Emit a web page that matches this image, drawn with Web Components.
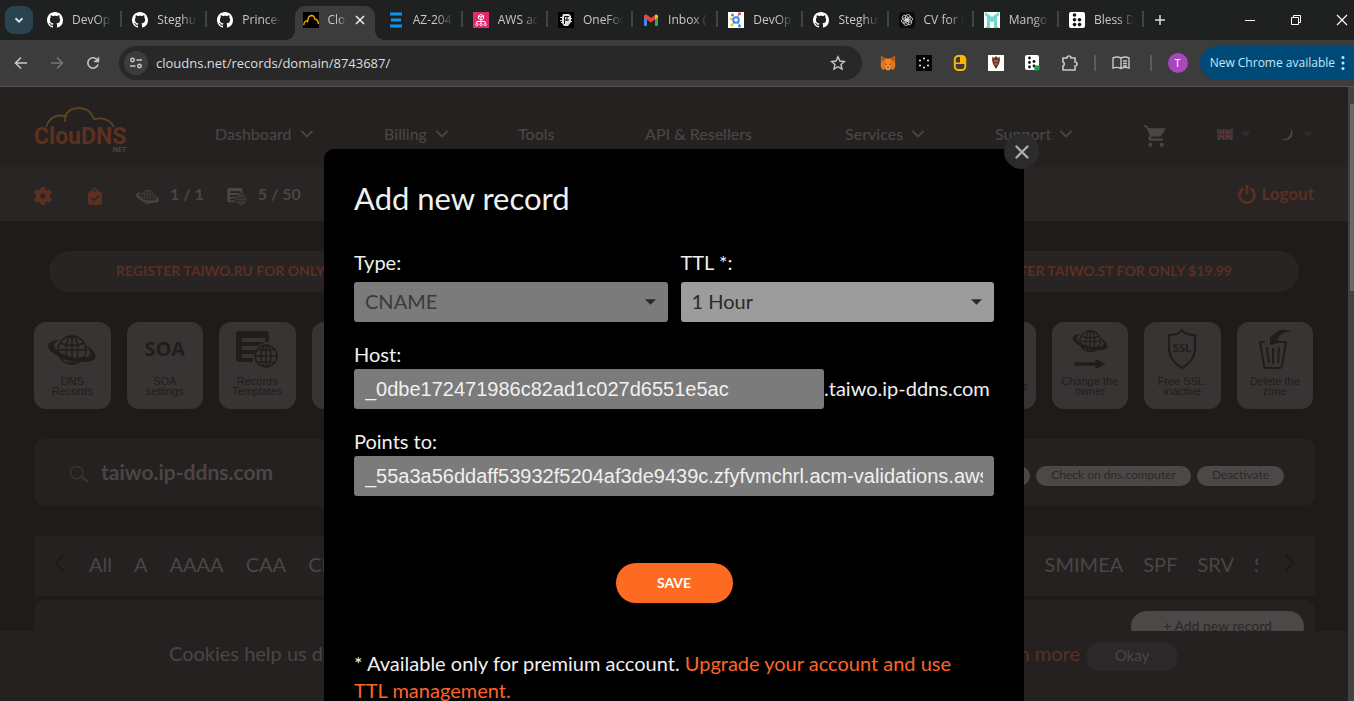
<!DOCTYPE html>
<html lang="en">
<head>
<meta charset="utf-8">
<title>ClouDNS: Add new record</title>
<style>
html,body{margin:0;height:100%}
body{background:#1f1b1a;overflow:hidden;--site:Lato,"Liberation Sans",sans-serif;--chrome:"Open Sans","Noto Sans",sans-serif;font-family:var(--site)}
</style>
</head>
<body>
<app-window></app-window>
<script>
const globe='<circle cx="24" cy="18" r="14"/><ellipse cx="24" cy="18" rx="6" ry="14"/><path d="M24 4v28M10 18h28M12 11q12 5 24 0M12 25q12 5 24 0"/>';
const ICONS={
 down:['0 0 12 12','<path d="M3 4.5l3 3 3-3" fill="none" stroke="currentColor" stroke-width="1.6"/>'],
 github:['0 0 16 16','<path fill="currentColor" d="M8 0C3.58 0 0 3.58 0 8c0 3.54 2.29 6.53 5.47 7.59.4.07.55-.17.55-.38 0-.19-.01-.82-.01-1.49-2.01.37-2.53-.49-2.69-.94-.09-.23-.48-.94-.82-1.13-.28-.15-.68-.52-.01-.53.63-.01 1.08.58 1.23.82.72 1.21 1.87.87 2.33.66.07-.52.28-.87.51-1.07-1.78-.2-3.64-.89-3.64-3.95 0-.87.31-1.59.82-2.15-.08-.2-.36-1.02.08-2.12 0 0 .67-.21 2.2.82.64-.18 1.32-.27 2-.27s1.36.09 2 .27c1.53-1.04 2.2-.82 2.2-.82.44 1.1.16 1.92.08 2.12.51.56.82 1.27.82 2.15 0 3.07-1.87 3.75-3.65 3.95.29.25.54.73.54 1.48 0 1.07-.01 1.93-.01 2.2 0 .21.15.46.55.38A8.01 8.01 0 0 0 16 8c0-4.42-3.58-8-8-8z"/>'],
 cloud:['0 0 16 16','<path fill="#000" d="M0 0h16v16H0z"/><path fill="none" stroke="#f6a200" stroke-width="1.4" d="M.8 13c.2-3 2-4.6 4-4.400C5 5.500 6 3.800 8.500 3.500c2 0 3 1.500 3.200 3.500 2 .2 3.500 2.500 3.700 5M4.500 9v1.500"/>'],
 bars:['0 0 16 16','<path fill="#0a95ea" d="M2 .5h12v3H2zM3 6.500h10v3H3zM2 12.500h12v3H2z"/>'],
 aws:['0 0 16 16','<path fill="#e0296f" d="M0 0h16v16H0z"/><g fill="none" stroke="#fff"><path d="M8 2.500l2.500 1.300v2.800L8 8 5.500 6.600V3.800zM5.500 3.800L8 5l2.500-1.200M8 5v6M3.800 11.500V9.500h8.400v2"/><circle cx="3.800" cy="12.500" r="1.100"/><circle cx="8" cy="12.500" r="1.100"/><circle cx="12.200" cy="12.500" r="1.100"/></g>'],
 one:['0 0 16 16','<path fill="#000" d="M0 0h16v16H0z"/><path fill="#ddd" d="M5 2h6l2 2v2h1v1h-1v2h1v1h-1l-3 4H6l-2-3H3v-1h1V9H2V8h2V6H2V5h2z"/><path fill="none" stroke="#111" d="M6.500 12V4.500H11M6.500 8H11M9 4v5"/>'],
 gmail:['0 0 16 16','<path fill="#4285f4" d="M1 4l3 2v8H2a1 1 0 0 1-1-1z"/><path fill="#34a853" d="M12 6l3-2v9a1 1 0 0 1-1 1h-2z"/><path fill="#ea4335" d="M1 4.500C1 2.500 3 2 4.300 3L8 6l4-3v4.500L8 10.500 1 5.500z"/><path fill="#fbbc04" d="M12 3c1.500-1 3 0 3 1.500V5.500L12 7.500z"/>'],
 devops:['0 0 16 16','<path fill="#fff" d="M0 0h16v16H0z"/><circle cx="8" cy="8" r="2.800" fill="none" stroke="#4285f4" stroke-width="2"/><path d="M9.500 5l1.500-3M6 10.500l-1.500 2M10.500 10.500l1 3" stroke="#4285f4"/><circle cx="4.500" cy="3" r="1.500" fill="#34a853"/><circle cx="11.500" cy="1.700" r="1.500" fill="#ea4335"/><circle cx="3" cy="7" r="1.200" fill="#fbbc04"/><circle cx="4" cy="13" r="1.500" fill="#fbbc04"/><circle cx="11.500" cy="14" r="1.500" fill="#4285f4"/>'],
 gpt:['0 0 16 16','<rect width="16" height="16" rx="3" fill="#0b0b0b"/><g fill="none" stroke="#ddd" stroke-width=".8"><ellipse cx="8.800" cy="5.600" rx="2.500" ry="3.200"/><ellipse cx="8.800" cy="5.600" rx="2.500" ry="3.200" transform="rotate(60 8 8)"/><ellipse cx="8.800" cy="5.600" rx="2.500" ry="3.200" transform="rotate(120 8 8)"/><ellipse cx="8.800" cy="5.600" rx="2.500" ry="3.200" transform="rotate(180 8 8)"/><ellipse cx="8.800" cy="5.600" rx="2.500" ry="3.200" transform="rotate(240 8 8)"/><ellipse cx="8.800" cy="5.600" rx="2.500" ry="3.200" transform="rotate(300 8 8)"/></g>'],
 mango:['0 0 16 16','<path fill="#f4fffd" d="M0 0h16v16H0z"/><path fill="#74d5cb" d="M1 0l7 5 7-5v3l-2 2v9l2 2h-5V9L8 10.500 6 9v7H1l2-2V5L1 3z"/>'],
 bless:['0 0 16 16','<rect width="16" height="16" rx="2" fill="#fff"/><g fill="#111"><circle cx="5.500" cy="3" r="1.800"/><circle cx="5.500" cy="7.800" r="1.800"/><circle cx="10.500" cy="7.800" r="1.800"/><circle cx="5.500" cy="12.600" r="1.800"/><circle cx="10.500" cy="12.600" r="1.800"/></g>'],
 blessOn:['0 0 16 16','<rect x="1" width="14" height="15" rx="2" fill="#fff"/><g fill="#111"><circle cx="5.500" cy="3" r="1.400"/><circle cx="5.500" cy="7.500" r="1.400"/><circle cx="10" cy="6.500" r="1.400"/><circle cx="5.500" cy="12" r="1.400"/><circle cx="10" cy="11" r="1.400"/></g><circle cx="13" cy="13" r="2.800" fill="#1ea446"/>'],
 close:['0 0 12 12','<path d="M2 2l8 8M10 2l-8 8" stroke="currentColor" stroke-width="1.500"/>'],
 bigclose:['0 0 16 16','<path d="M2.500 2.500l11 11M13.500 2.500l-11 11" stroke="currentColor" stroke-width="2.400" stroke-linecap="round"/>'],
 plus:['0 0 12 12','<path d="M6 1v10M1 6h10" stroke="currentColor" stroke-width="1.500"/>'],
 min:['0 0 12 12','<path d="M1 6.500h10" stroke="currentColor"/>'],
 restore:['0 0 12 12','<path d="M1.500 3.500h7v7h-7zM3.500 3.500v-2h7v7h-2" fill="none" stroke="currentColor"/>'],
 winx:['0 0 12 12','<path d="M1 1l10 10M11 1L1 11" stroke="currentColor" stroke-width="1.100"/>'],
 back:['0 0 14 14','<path d="M13 7H2M7 1.500L1.500 7 7 12.500" fill="none" stroke="currentColor" stroke-width="1.600"/>'],
 fwd:['0 0 14 14','<path d="M1 7h11M7 1.500L12.500 7 7 12.500" fill="none" stroke="currentColor" stroke-width="1.600"/>'],
 reload:['0 0 14 14','<path d="M12 8.500A5.200 5.200 0 1 1 11.500 4.300M12.400 1.200v4.200H8.200" fill="none" stroke="currentColor" stroke-width="1.600"/>'],
 tune:['0 0 14 14','<g fill="none" stroke="currentColor" stroke-width="1.500"><circle cx="3.500" cy="4" r="1.700"/><path d="M7.500 4H13M1 10h5.500"/><circle cx="10.500" cy="10" r="1.700"/></g>'],
 star:['0 0 16 16','<path d="M8 1.800l1.900 4.200 4.500.5-3.400 3 1 4.500L8 11.700 4 14l1-4.500-3.400-3L6.100 6z" fill="none" stroke="currentColor" stroke-width="1.400"/>'],
 fox:['0 0 16 16','<path fill="#e2761b" d="M.8.800L6 3.500h4L15.200.8l-.2 6 .4 4-1.500 4-3.400-.8-1.300 1.200H6.800l-1.300-1.200-3.400.8-1.500-4 .4-4z"/><path fill="#a8561f" d="M.8.800L6 4 2 6.500zM15.200.8L10 4l4 2.500z"/><path fill="#f6851b" d="M6 4h4l2 6-2 3H6l-2-3z"/><path fill="#233447" d="M4.500 8.500l2 .5-.5 1zM11.500 8.500l-2 .5.500 1z"/><path fill="#d7c1b3" d="M6 12.500h4l-.8 2.500H6.800z"/><path fill="#222" d="M7 12.500h2l-.5 1.200h-1z"/>'],
 dots:['0 0 16 16','<path fill="#050505" d="M0 0h16v16H0z"/><g fill="#eee"><circle cx="8" cy="3.500" r="1"/><circle cx="4" cy="5.500" r="1"/><circle cx="12" cy="5.500" r="1"/><circle cx="4" cy="10.500" r="1"/><circle cx="12" cy="10.500" r="1"/><circle cx="8" cy="12.500" r="1"/></g>'],
 mouse:['0 0 16 16','<rect x="2.800" y="1" width="10.500" height="14" rx="3.500" fill="none" stroke="#fdb300" stroke-width="2"/><path fill="#fdb300" d="M8 1h3q2.500 0 2.500 3v4H8zM3 7.500h10v1.500H3z"/>'],
 crest:['0 0 16 16','<path fill="#fff" d="M0 0h16v16H0z"/><path fill="#6b3428" d="M4.500 1.500L6 3l2-2 2 2 1.500-1.500L12 5l-1 4-3 5-3-5-1-4z"/><path d="M6 6h4M6.500 9h3" stroke="#d98c62"/>'],
 puzzle:['0 0 18 18','<path d="M3 4h4a2 2 0 0 1 4 0h4v4a2 2 0 0 1 0 4v4H3v-4a2.200 2.200 0 0 0 0-4z" fill="none" stroke="currentColor" stroke-width="1.600"/>'],
 book:['0 0 18 16','<path d="M9 3Q5 1 1 3v10q4-1.500 8 .5 4-2 8-.5V3Q13 1 9 3v10.500M11 6h4M11 8.500h4M11 11h4" fill="none" stroke="currentColor" stroke-width="1.400"/>'],
 more:['0 0 4 16','<g fill="currentColor"><circle cx="2" cy="2.500" r="1.500"/><circle cx="2" cy="8" r="1.500"/><circle cx="2" cy="13.500" r="1.500"/></g>'],
 chev:['0 0 14 10','<path d="M1.500 2L7 7.500 12.500 2" fill="none" stroke="currentColor" stroke-width="1.900"/>'],
 caret:['0 0 12 6','<path d="M0 0h12L6 6z" fill="currentColor"/>'],
 left:['0 0 10 18','<path d="M9 1L2 9l7 8" fill="none" stroke="currentColor" stroke-width="2"/>'],
 right:['0 0 10 18','<path d="M1 1l7 8-7 8" fill="none" stroke="currentColor" stroke-width="2"/>'],
 cart:['0 0 24 24','<path fill="currentColor" d="M7 18a2 2 0 1 0 0 4 2 2 0 0 0 0-4zM1 1v2h2l3.600 7.600-1.400 2.500C4.500 14.400 5.500 16 7 16h12v-2H7.400l1.100-2h7.500a2 2 0 0 0 1.700-1L22 4H5.200l-.9-2zM18 18a2 2 0 1 0 0 4 2 2 0 0 0 0-4z"/>'],
 flag:['0 0 16 11','<path fill="#2f2a36" d="M0 0h16v11H0z"/><path d="M0 0l16 11M16 0L0 11" stroke="#443c3f" stroke-width="2"/><path d="M8 0v11M0 5.500h16" stroke="#4a4042" stroke-width="4"/><path d="M8 0v11M0 5.500h16" stroke="#572125" stroke-width="2"/>'],
 moon:['0 0 16 16','<path fill="currentColor" d="M10.500.5A7.800 7.800 0 1 1 .5 12.500 8.300 8.300 0 0 0 10.500.5z"/>'],
 gear:['2 2 20 20','<path fill="currentColor" fill-rule="evenodd" d="M19.600 13.500l.1-1.500-.1-1.500 2.300-1.800-2.300-4-2.800 1.100-2.300-1.400L14 1.500h-4l-.5 2.900-2.300 1.400-2.800-1.100-2.300 4 2.300 1.800-.1 1.500.1 1.500-2.300 1.800 2.300 4 2.800-1.100 2.300 1.400.5 2.900h4l.5-2.900 2.300-1.400 2.800 1.100 2.300-4zM12 15a3 3 0 1 1 0-6 3 3 0 0 1 0 6z"/>'],
 task:['0 0 14 18','<path fill="currentColor" d="M7 0l3 3 4 3v10a2 2 0 0 1-2 2H2a2 2 0 0 1-2-2V6l4-3z"/><circle cx="7" cy="3.500" r="1" fill="#282423"/><path d="M3.500 11l2.500 2.500 5-5" fill="none" stroke="#282423" stroke-width="1.500"/>'],
 planet:['0 0 48 34','<g fill="none" stroke="currentColor" stroke-width="1.400">'+globe+'</g><path fill="currentColor" fill-rule="evenodd" d="M11 8C3 8-2 12 1 17c5 8 24 14 36 13 9 0 12-4 10-8-1-3-6-7-10-9 4 4 7 8 4 11-5 4-22 2-30-4C4 16 5 11 11 8z"/>'],
 record:['0 0 42 37','<path fill="currentColor" fill-rule="evenodd" d="M3 0h27a3 3 0 0 1 3 3v8H29V7H6v4h22v1q-4 1-6 3H6v4h13l-1 4H6v4h11v4H3a3 3 0 0 1-3-3V3a3 3 0 0 1 3-3z"/><g transform="translate(9 6)" fill="none" stroke="currentColor" stroke-width="1.500"><circle cx="21" cy="19" r="11"/><ellipse cx="21" cy="19" rx="5" ry="11"/><path d="M21 8v22M10 19h22M12 13h18M12 25h18"/></g>'],
 power:['0 0 18 20','<path d="M5.500 4.500a7.500 7.500 0 1 0 7 0M9 1v9" fill="none" stroke="currentColor" stroke-width="2.600"/>'],
 search:['0 0 22 18','<circle cx="8" cy="7.500" r="6.500" fill="none" stroke="currentColor" stroke-width="1.500"/><path d="M13 12l7 5" stroke="currentColor" stroke-width="2"/>'],
 owner:['0 0 48 48','<g transform="translate(4 0) scale(.84)"><g fill="none" stroke="currentColor" stroke-width="1.600">'+globe+'</g><path fill="currentColor" fill-rule="evenodd" d="M11 8C3 8-2 12 1 17c5 8 24 14 36 13 9 0 12-4 10-8-1-3-6-7-10-9 4 4 7 8 4 11-5 4-22 2-30-4C4 16 5 11 11 8z"/></g><path fill="currentColor" d="M6 39h24v-4l12 6-12 6v-4H6z"/>'],
 shield:['0 0 30 42','<path d="M15 2q-3 5-13 5v15q1 11 13 18 12-7 13-18V7Q18 7 15 2z" fill="none" stroke="currentColor" stroke-width="2.200"/><text x="15" y="24" text-anchor="middle" font-family="Open Sans,sans-serif" font-weight="700" font-size="11" fill="currentColor">SSL</text>'],
 trash:['0 0 34 42','<path d="M7 14H2l4 24q0 2 3 2h12q3 0 3-2l4-24h-6M9 19l2 16M15 20v16M21 19l-1 16" fill="none" stroke="currentColor" stroke-width="2"/><path fill="currentColor" d="M12 5l1 4Q23-3 34 4 24 2 19 12l5 2-12 3z"/>']
};
function define(name,css,html){
  const t=document.createElement('template');
  t.innerHTML=`<style>*{box-sizing:border-box}button,input,select{font:inherit;margin:0}button{border:0;padding:0;background:none;color:inherit;cursor:pointer}a{color:inherit;text-decoration:none}${css}</style>${html}`;
  customElements.define(name,class extends HTMLElement{
    constructor(){super();this.attachShadow({mode:'open'}).append(t.content.cloneNode(true));}
  });
}
customElements.define('ui-icon',class extends HTMLElement{
  connectedCallback(){
    if(this.shadowRoot)return;
    const [box,body]=ICONS[this.getAttribute('name')],w=this.getAttribute('w')||16,h=this.getAttribute('h')||w;
    this.attachShadow({mode:'open'}).innerHTML=`<style>:host{display:inline-flex;flex:none}svg{display:block}</style><svg width="${w}" height="${h}" viewBox="${box}" aria-hidden="true">${body}</svg>`;
  }
});

define('browser-tab',`
:host{display:flex;flex:1 1 85px;min-width:0;height:34px;align-items:center;gap:9px;padding:0 10px;position:relative;color:#c7c7c7;font:12px/16px var(--chrome)}
:host([sep])::after{content:"";position:absolute;right:0;top:8px;width:2px;height:16px;background:#424443}
.t{flex:1;min-width:0;overflow:hidden;white-space:nowrap;-webkit-mask:linear-gradient(90deg,#000 60%,transparent);mask:linear-gradient(90deg,#000 60%,transparent)}
:host([active]){background:#3c3c3c;border-radius:10px 10px 0 0;margin:0 3px;flex-basis:79px;padding:0 9px 6px 8px;gap:8px;align-self:flex-end}
:host([active])::before{content:"";position:absolute;inset:auto -10px 0;height:10px;background:radial-gradient(circle at 0 0,transparent 10px,#3c3c3c 10px) left/10px 10px no-repeat,radial-gradient(circle at 100% 0,transparent 10px,#3c3c3c 10px) right/10px 10px no-repeat}
.x{display:none}:host([active]) .x{display:flex;color:#eee}
`,`<slot name="icon"></slot><span class="t"><slot></slot></span><button class="x" aria-label="Close tab"><ui-icon name="close" w="12"></ui-icon></button>`);

const tabs=[['github','DevOps',1],['github','Steghub',1],['github','Prince-T'],['cloud','ClouDNS'],['bars','AZ-204',1],['aws','AWS acc',1],['one','OneFoo',1],['gmail','Inbox (1',1],['devops','DevOps',1],['github','Steghub',1],['gpt','CV for D',1],['mango','Mango',1],['bless','Bless D',1]];
define('browser-tabs',`
:host{display:flex;height:40px;background:#1f2120;color:#ddd;align-items:center;padding-left:5px}
.menu{width:28px;height:28px;border-radius:9px;background:#2a4350;display:grid;place-items:center;margin-right:4px;flex:none}
.tabs{display:flex;align-items:center;height:40px;flex:0 1 1107px;min-width:0}
.plus{margin-left:10px}
.plus,.win button{display:flex}
.win{display:flex;gap:34px;margin-left:auto;padding-right:6px;color:#fff}
`,`<button class="menu" aria-label="Search tabs"><ui-icon name="down" w="14"></ui-icon></button><div class="tabs">${tabs.map(([i,t,s])=>`<browser-tab ${s?'sep':''} ${i=='cloud'?'active':''}><ui-icon slot="icon" name="${i}" ${i=='github'?'style="color:#fff"':''}></ui-icon>${t}</browser-tab>`).join('')}</div><button class="plus" aria-label="New tab"><ui-icon name="plus" w="12"></ui-icon></button><div class="win"><button aria-label="Minimize"><ui-icon name="min" w="12"></ui-icon></button><button aria-label="Restore"><ui-icon name="restore" w="12"></ui-icon></button><button aria-label="Close"><ui-icon name="winx" w="12"></ui-icon></button></div>`);

define('browser-toolbar',`
:host{display:flex;height:47px;background:#3c3c3c;border-bottom:1px solid #555;align-items:center;color:#c7c7c7;font:14px/20px var(--chrome);padding-left:14px}
.nav{display:flex;gap:22px;margin-right:19px}.dim{color:#777}
.nav button,.star{display:flex}
.url{flex:1;display:flex;align-items:center;height:34px;border-radius:17px;background:#282828;padding:0 16px 0 5px;gap:8px}
.site{width:24px;height:24px;border-radius:50%;background:#3c3c3c;display:grid;place-items:center;flex:none}
input{flex:1;min-width:0;border:0;background:none;color:#dedede;padding:0;outline:0;font-size:13px}
.ext{display:flex;align-items:center;gap:20px;margin:0 20px 0 18px}
.ext i{width:2px;height:16px;background:#5c5c5c}
.ext .first{margin:0 -4px 0 -4px}
.ext .last{margin:0 -4px 0 0}
.av{width:20px;height:20px;border-radius:50%;background:#ab47bc;color:#fff;font-size:11px;display:grid;place-items:center;margin-right:12px}
.upd{height:34px;border-radius:17px 0 0 17px;background:#004a77;color:#c2e7ff;font-size:12px;padding:0 9px 0 10px;display:flex;align-items:center;gap:6px;white-space:nowrap}
`,`<div class="nav"><button aria-label="Back"><ui-icon name="back" w="14"></ui-icon></button><button class="dim" aria-label="Forward"><ui-icon name="fwd" w="14"></ui-icon></button><button aria-label="Reload"><ui-icon name="reload" w="14"></ui-icon></button></div>
<div class="url"><button class="site" aria-label="Site information"><ui-icon name="tune" w="14"></ui-icon></button><input aria-label="Address" value="cloudns.net/records/domain/8743687/"><button class="star" aria-label="Bookmark"><ui-icon name="star" w="16"></ui-icon></button></div>
<div class="ext"><ui-icon name="fox"></ui-icon><ui-icon name="dots"></ui-icon><ui-icon name="mouse"></ui-icon><ui-icon name="crest"></ui-icon><ui-icon name="blessOn"></ui-icon><ui-icon name="puzzle" w="18"></ui-icon><i class="first"></i><ui-icon name="book" w="18" h="16"></ui-icon><i class="last"></i></div>
<button class="av" aria-label="Profile">T</button><button class="upd">New Chrome available <ui-icon name="more" w="4" h="16"></ui-icon></button>`);

const nav=[['Dashboard',1],['Billing',1],['Tools'],['API &amp; Resellers'],['Services',1],['Support',1]];
define('site-header',`
:host{display:block;color:#4a4645}
.top{display:flex;height:80px;background:#242120;padding:0 34px}
.logo{margin:20px 87px 0 0;flex:none}
nav{flex:1;display:grid;grid-template-columns:169fr 134fr 127fr 200fr 150fr 148fr 74fr 63fr 34fr;align-items:center;font-size:16px;line-height:24px;font-weight:500;padding-top:14px}
nav>*{min-width:0;white-space:nowrap;display:flex;align-items:center;gap:8px}
.cart{padding-top:4px}
.c{color:#302c2b}
.bar{display:flex;height:54px;align-items:center;background:#292524;padding:0 34px;font-size:16px;line-height:24px;font-weight:700}
.o{display:flex;color:#5c2f20}
.a,.b,.g{margin-top:4px}
.a{margin-right:36px}.b{margin-right:34px}.g{margin-right:11px}.n{margin-right:23px}
.out{margin-left:auto;align-items:center;gap:5px;font-size:17px}
`,`<div class="top"><a class="logo" href="#"><svg width="94" height="48" viewBox="0 0 94 48" aria-label="ClouDNS.net"><path d="M12 20Q17 6 31 9Q35 1 45 1 56 1 60 12q14-3 20 8M31 15V12Q31 10 33 8" fill="none" stroke="#594420" stroke-width="1.800"/><text x="0" y="37" font-family="Roboto,sans-serif" font-weight="700" font-size="23" fill="#5f301f">ClouDNS</text><text x="92" y="45" text-anchor="end" font-family="Roboto,sans-serif" font-weight="700" font-size="7" fill="#4b4746">.NET</text></svg></a>
<nav>${nav.map(([t,c])=>`<a href="#">${t}${c?' <ui-icon name="chev" w="14" h="10"></ui-icon>':''}</a>`).join('')}<a class="cart" href="#" aria-label="Cart"><ui-icon name="cart" w="25"></ui-icon></a><a href="#" aria-label="Language"><ui-icon name="flag" w="16" h="11"></ui-icon><ui-icon class="c" name="caret" w="10" h="5"></ui-icon></a><a href="#" aria-label="Theme"><ui-icon name="moon" w="15"></ui-icon><ui-icon class="c" name="caret" w="10" h="5"></ui-icon></a></nav></div>
<div class="bar"><a href="#" class="o a" aria-label="Settings"><ui-icon name="gear" w="18"></ui-icon></a><a href="#" class="o b" aria-label="Tasks"><ui-icon name="task" w="14" h="18"></ui-icon></a><ui-icon class="g" name="planet" w="23" h="17"></ui-icon><span class="n">1 / 1</span><ui-icon class="g" name="record" w="20" h="17"></ui-icon><span>5 / 50</span><a href="#" class="o out"><ui-icon name="power" w="18" h="20"></ui-icon>Logout</a></div>`);

define('tool-card',`
:host{display:block;min-width:0}
a{display:flex;flex-direction:column;align-items:center;height:87px;border-radius:12px;background:#383433;color:#211d1c;padding-top:5px;text-align:center;font:11px/10px "Liberation Sans",sans-serif}
.p{height:44px;display:grid;place-items:center;font:700 20px/24px "Open Sans",sans-serif;margin-bottom:5px}
.l{height:20px;display:grid;align-items:center}
`,`<a href="#"><span class="p"><slot name="icon"></slot></span><span class="l"><span><slot></slot></span></span></a>`);

const card=(ic,t)=>`<tool-card>${ic}${t}</tool-card>`;
const I=(n,w,h)=>`<ui-icon slot="icon" name="${n}" w="${w}" h="${h}"></ui-icon>`;
define('zone-page',`
:host{display:block;padding:30px 33px 0 34px;color:#4a4645}
.promo{display:flex;justify-content:space-between;align-items:center;height:41px;margin:0 16px 30px 15px;border-radius:21px;background:#272423;color:#5c2f20;padding:0 67px 2px;font-size:14px;line-height:20px;font-weight:700}
.cards{display:grid;grid-template-columns:repeat(14,minmax(0,1fr));gap:16px;margin:0 2px 30px 0}
.zone{display:flex;align-items:center;height:67px;border-radius:10px;background:#242120;padding:0 31px 2px 35px;margin-bottom:30px}
h1{margin:0 auto 0 11px;font-size:21px;line-height:28px;font-weight:700}
.pill{height:20px;border-radius:10px;background:#4c4847;color:#2b2726;font-size:12px;line-height:18px;padding:0 15px 2px;margin-left:6px;margin-top:8px}
.zone ui-icon{color:#3a3635;margin-top:5px}
.types{display:flex;align-items:center;height:60px;background:#242120;padding:0 20px 4px;font-size:20px;line-height:28px;margin-bottom:4px}
.types button{color:#1e1a19}
.grp{display:flex;gap:20px;margin-left:25px;overflow:hidden}
.grp:first-of-type{gap:22px}
.grp+.grp{margin-left:auto;margin-right:27px}
.cut{width:4px;overflow:hidden}
.rows{height:100px;background:#242120;border-radius:10px 10px 0 0;display:flex;justify-content:flex-end;padding:11px 11px}
.add{height:31px;width:173px;border-radius:16px;background:#4c4847;color:#2b2726;font-size:14px;line-height:29px;padding-bottom:2px}
`,`<div class="promo"><a href="#">REGISTER TAIWO.RU FOR ONLY</a><a href="#">REGISTER TAIWO.ST FOR ONLY $19.99</a></div>
<div class="cards">${card(I('planet',48,34),'DNS<br>Records')}${card('<span slot="icon">SOA</span>','SOA<br>settings')}${card(I('record',42,37),'Records<br>Templates')}${card('','').repeat(7)}${card('','Notifications')}${card(I('owner',42,42),'Change the<br>owner')}${card(I('shield',30,42),'Free SSL:<br>inactive')}${card(I('trash',34,42),'Delete the<br>zone')}</div>
<div class="zone"><ui-icon name="search" w="21" h="18"></ui-icon><h1>taiwo.ip-ddns.com</h1><button class="pill" aria-label="More"></button><button class="pill">Check on dns.computer</button><button class="pill">Deactivate</button></div>
<div class="types"><button aria-label="Previous types"><ui-icon name="left" w="10" h="18"></ui-icon></button><div class="grp"><a href="#">All</a><a href="#">A</a><a href="#">AAAA</a><a href="#">CAA</a><a href="#">CERT</a></div><div class="grp"><a href="#">SMIMEA</a><a href="#">SPF</a><a href="#">SRV</a><a class="cut" href="#">S</a></div><button aria-label="Next types"><ui-icon name="right" w="10" h="18"></ui-icon></button></div>
<div class="rows"><button class="add">+ Add new record</button></div>`);

define('cookie-bar',`
:host{display:flex;justify-content:space-between;height:70px;background:#252120;color:#4a4645;font-size:20px;line-height:28px;padding:8px 170px 0 169px}
.r{display:flex;gap:6px}.r a{color:#5c2f20}
button{height:29px;width:92px;border-radius:15px;background:#2a2829;font-size:15px;line-height:27px;padding-bottom:2px;color:#4a4645;margin-top:3px}
`,`<span>Cookies help us deliver</span><span class="r"><a href="#">Learn more</a><button>Okay</button></span>`);

define('record-dialog',`
:host{display:block;width:700px;background:#000;border-radius:10px 10px 0 0;color:#f0f0f0;padding:30px;font-size:20px;line-height:27px}
.x{position:absolute;right:-15px;top:-15px;width:35px;height:35px;border-radius:50%;background:#2b2b2b;color:#aaa;display:grid;place-items:center}
h2{font-size:31px;line-height:38px;font-weight:400;margin:0 0 32px}
.two{display:grid;grid-template-columns:1fr 1fr;gap:13px;margin-bottom:19px}
label{display:block;margin-bottom:1px}
.two label{margin-bottom:6px}
.sel{display:grid;align-items:center}
.sel>*{grid-area:1/1}
.sel ui-icon{justify-self:end;margin-right:12px;pointer-events:none;color:#2a2a2a}
select{appearance:none;width:100%;height:40px;border:0;border-radius:3px;background:#9c9c9c;color:#2a2a2a;padding:0 11px 2px}
select:disabled{background:#7b7b7b;color:#3a3a3a;opacity:1}
input{height:40px;width:100%;border:0;border-radius:3px;background:#7b7b7b;color:#f0f0f0;padding:0 11px;font:20px/27px "Liberation Sans",sans-serif}
.host{display:flex;align-items:center;margin-bottom:19px}
.host input{flex:1;min-width:0}
.host span{width:170px;white-space:nowrap;padding-bottom:2px}
.save{display:block;width:117px;height:40px;border-radius:20px;background:#ff6a22;color:#fff;font-size:14px;font-weight:700;margin:67px auto 47px;padding-bottom:2px}
p{margin:0;padding-right:20px}p a{color:#ff6428}
`,`<button class="x" aria-label="Close"><ui-icon name="bigclose" w="16"></ui-icon></button><h2>Add new record</h2>
<div class="two"><div><label for="type">Type:</label><div class="sel"><select id="type" disabled><option>CNAME</option></select><ui-icon name="caret" w="11" h="6"></ui-icon></div></div><div><label for="ttl">TTL *:</label><div class="sel"><select id="ttl"><option>1 Hour</option></select><ui-icon name="caret" w="11" h="6"></ui-icon></div></div></div>
<label for="host">Host:</label><div class="host"><input id="host" value="_0dbe172471986c82ad1c027d6551e5ac"><span>.taiwo.ip-ddns.com</span></div>
<label for="points">Points to:</label><input id="points" value="_55a3a56ddaff53932f5204af3de9439c.zfyfvmchrl.acm-validations.aws">
<button class="save">SAVE</button><p>* Available only for premium account. <a href="#">Upgrade your account and use TTL management.</a></p>`);

define('app-window',`
:host{display:flex;flex-direction:column;height:100vh;overflow:hidden}
.view{flex:1;min-height:0;display:flex}
.site{flex:1;min-width:0;position:relative;overflow:hidden;background:#1f1b1a}
cookie-bar{position:absolute;left:0;right:0;bottom:0}
record-dialog{position:absolute;top:62px;left:50%;margin-left:-350px}
.scroll{width:6px;background:#424242;padding:17px 0 0 2px}
.scroll i{display:block;height:187px;background:#686868}
`,`<browser-tabs></browser-tabs><browser-toolbar></browser-toolbar><div class="view"><div class="site"><site-header></site-header><zone-page></zone-page><cookie-bar></cookie-bar><record-dialog></record-dialog></div><div class="scroll"><i></i></div></div>`);
</script>
</body>
</html>
